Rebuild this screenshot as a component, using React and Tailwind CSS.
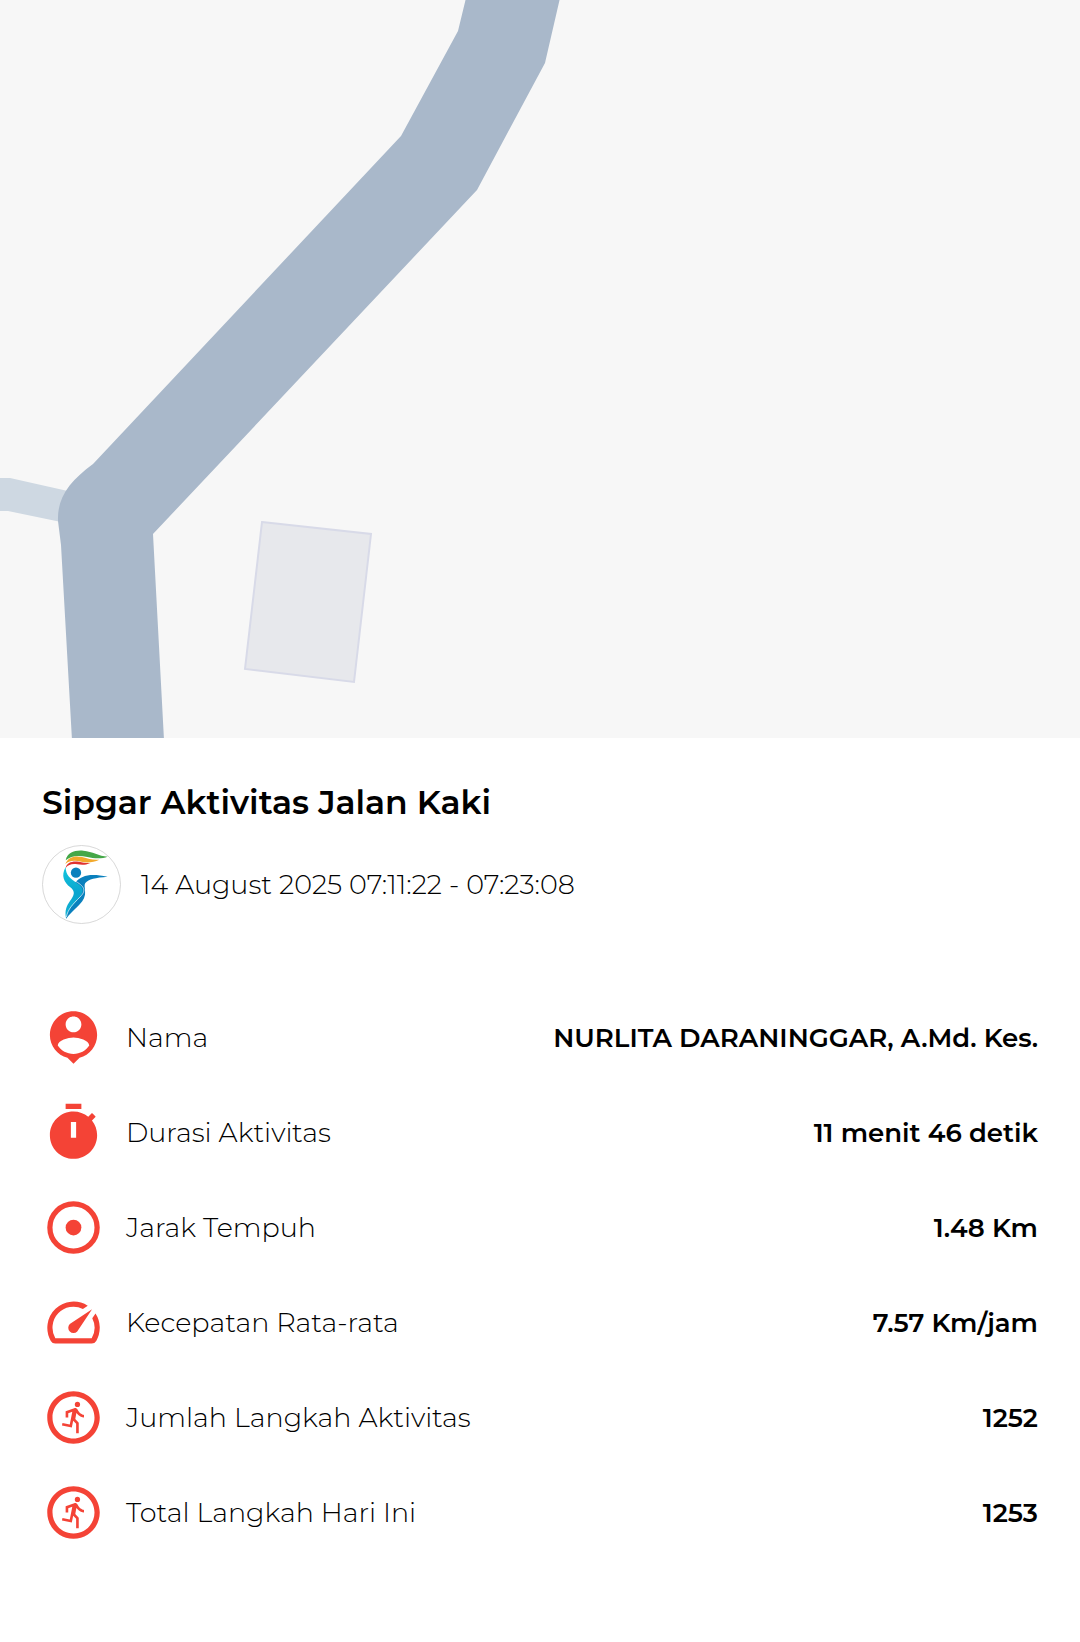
import { MdOutlineRunCircle } from "react-icons/md";

const ICON = "size-[63px] shrink-0 text-[#f44336]";

function Icon({ children }) {
  return (
    <svg viewBox="0 0 24 24" fill="currentColor" className={ICON} aria-hidden="true">
      {children}
    </svg>
  );
}

const PersonIcon = () => (
  <Icon>
    <path
      fillRule="evenodd"
      d="M12 2c-4.97 0-9 4.03-9 9 0 4.17 2.84 7.67 6.69 8.69L12 22l2.31-2.31C18.16 18.67 21 15.17 21 11c0-4.97-4.03-9-9-9zm0 2c1.66 0 3 1.34 3 3s-1.34 3-3 3-3-1.34-3-3 1.34-3 3-3zm0 14.3c-2.5 0-4.71-1.28-6-3.22.03-1.99 4-3.08 6-3.08s5.97 1.09 6 3.08c-1.29 1.94-3.5 3.22-6 3.22z"
    />
  </Icon>
);

const TimerIcon = () => (
  <Icon>
    <path
      fillRule="evenodd"
      d="M15 1H9v2h6V1zm4.03 6.39 1.42-1.42c-.43-.51-.9-.99-1.41-1.41l-1.42 1.42C16.07 4.74 14.12 4 12 4c-4.97 0-9 4.03-9 9s4.02 9 9 9 9-4.03 9-9c0-2.12-.74-4.07-1.97-5.61zM13 14h-2V8h2v6z"
    />
  </Icon>
);

const TargetIcon = () => (
  <Icon>
    <circle cx="12" cy="12" r="9" fill="none" stroke="currentColor" strokeWidth="2" />
    <circle cx="12" cy="12" r="3" />
  </Icon>
);

const SpeedIcon = () => (
  <Icon>
    <path d="M20.38 8.57l-1.23 1.85a8 8 0 0 1-.22 7.58H5.07A8 8 0 0 1 15.58 6.85l1.85-1.23A10 10 0 0 0 3.35 19a2 2 0 0 0 1.72 1h13.85a2 2 0 0 0 1.74-1 10 10 0 0 0-.27-10.44zm-9.79 6.84a2 2 0 0 0 2.83 0l5.66-8.49-8.49 5.66a2 2 0 0 0 0 2.83z" />
  </Icon>
);

const RunIcon = () => <MdOutlineRunCircle className={ICON} aria-hidden="true" />;

function Logo() {
  return (
    <svg viewBox="0 0 237 237" className="size-[79px] shrink-0" role="img" aria-label="Sipgar">
      <defs>
        <linearGradient id="arm" x1="0" y1="0" x2="0" y2="1">
          <stop offset="0" stopColor="#14c8de" />
          <stop offset="0.5" stopColor="#0aa5cf" />
          <stop offset="1" stopColor="#12b4d4" />
        </linearGradient>
      </defs>
      <circle cx="118.5" cy="118.5" r="117" fill="#fff" stroke="#c4c4c4" strokeWidth="2" />
      <path d="M71 46C76 22 98 15 124 17C152 19 170 33 197 35C178 43 154 40 136 36C110 30 86 32 71 46Z" fill="#45a748" />
      <path d="M70 57C78 36 98 31 120 36C140 41 152 46 172 44C154 53 134 54 118 50C98 45 82 46 70 57Z" fill="#f2a92c" />
      <path d="M71 69C74 52 92 47 110 50C124 52 132 55 145 54C130 61 118 60 106 58C90 56 80 58 71 69Z" fill="#e0322f" />
      <circle cx="102" cy="83" r="15.5" fill="#0a80bd" />
      <path d="M71 66C56 92 66 112 85 127C101 140 97 151 84 168C73 184 68 196 72 220C80 200 96 182 112 162C130 140 128 126 108 115C84 102 71 90 71 66Z" fill="url(#arm)" />
      <path d="M100 112C118 90 146 84 197 95C160 98 140 102 130 114C125 121 131 132 129 149C124 178 92 192 72 222C74 192 98 178 116 152C130 132 116 122 100 112Z" fill="#0a80bd" />
      <path d="M96 106C128 124 134 136 114 156C92 178 78 192 73 216" fill="none" stroke="#fff" strokeWidth="2" />
    </svg>
  );
}

function RouteMap() {
  return (
    <svg viewBox="0 0 1080 738" className="block w-full bg-[#f7f7f7]" role="img" aria-label="Peta rute">
      <path d="M-5 478H10L90 496V528L8 511H-5Z" fill="#ced8e2" />
      <path
        d="M466 -2L458 31L401 136L93 464C70 481 57 497 58 521L61 545L72 740H164L153 534L477 190L545 63L560 -2Z"
        fill="#a9b8ca"
      />
      <path d="M262 522L371 534L354 682L245 669Z" fill="#e7e8ec" stroke="#d8dae8" strokeWidth="2" />
    </svg>
  );
}

const stats = [
  { icon: PersonIcon, label: "Nama", value: "NURLITA DARANINGGAR, A.Md. Kes." },
  { icon: TimerIcon, label: "Durasi Aktivitas", value: "11 menit 46 detik" },
  { icon: TargetIcon, label: "Jarak Tempuh", value: "1.48 Km" },
  { icon: SpeedIcon, label: "Kecepatan Rata-rata", value: "7.57 Km/jam" },
  { icon: RunIcon, label: "Jumlah Langkah Aktivitas", value: "1252" },
  { icon: RunIcon, label: "Total Langkah Hari Ini", value: "1253" },
];

export default function App() {
  return (
    <main className="min-h-screen bg-white font-['Montserrat','Inter',sans-serif] text-black">
      <RouteMap />
      <section className="px-[42px] pt-[42px]">
        <h1 className="text-[33px] leading-[44px] font-semibold">Sipgar Aktivitas Jalan Kaki</h1>
        <div className="mt-[21px] flex items-center gap-5">
          <Logo />
          <p className="text-[27px] leading-9 font-light">14 August 2025 07:11:22 - 07:23:08</p>
        </div>
        <dl className="mt-[82px] flex flex-col gap-8">
          {stats.map(({ icon: StatIcon, label, value }) => (
            <div key={label} className="flex items-center">
              <StatIcon />
              <dt className="ml-[21px] text-[27px] leading-9 font-light">{label}</dt>
              <dd className="ml-auto text-[26px] leading-9 font-semibold">{value}</dd>
            </div>
          ))}
        </dl>
      </section>
    </main>
  );
}
